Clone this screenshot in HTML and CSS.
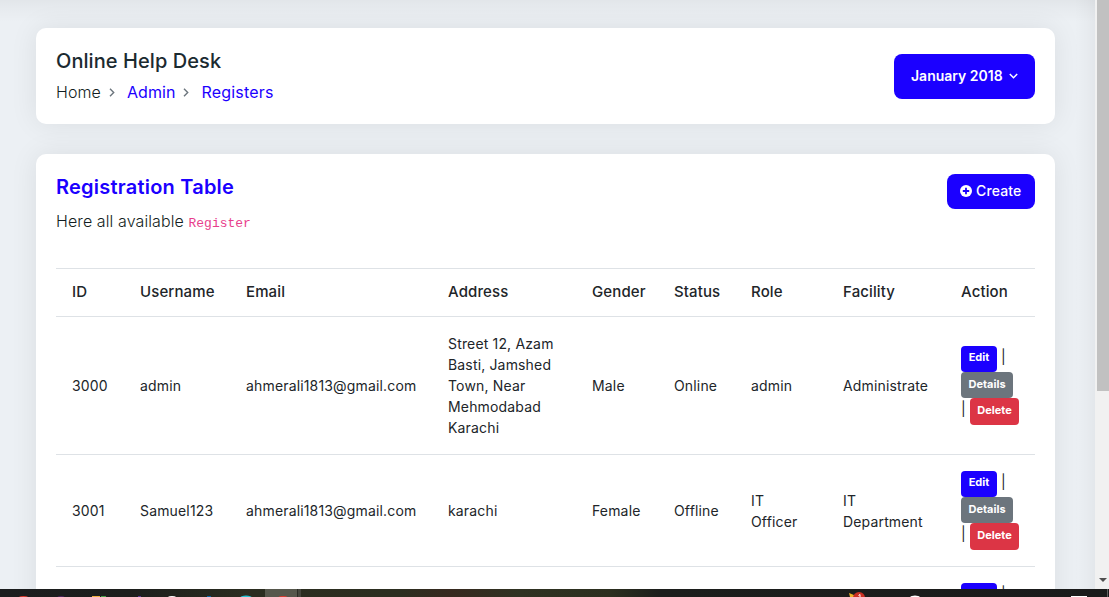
FILE: index.html
```html
<!DOCTYPE html>
<html lang="en">
<head>
<meta charset="utf-8">
<title>Online Help Desk</title>
<link rel="stylesheet" href="styles.css">
</head>
<body>
<div class="screen">
  <div class="browser">
    <main class="page">
      <section class="card page-header">
        <div>
          <h4 class="title">Online Help Desk</h4>
          <nav class="breadcrumb">
            <span>Home</span>
            <svg class="sep" viewBox="0 0 6 9"><path d="M1 .8 4.7 4.500 1 8.200"/></svg>
            <a>Admin</a>
            <svg class="sep" viewBox="0 0 6 9"><path d="M1 .8 4.7 4.500 1 8.200"/></svg>
            <a class="current">Registers</a>
          </nav>
        </div>
        <button class="month">January 2018<svg viewBox="0 0 9 6"><path d="M.8 1 4.500 4.700 8.200 1"/></svg></button>
      </section>
      <section class="card table-card">
        <div class="card-head">
          <div>
            <h4 class="table-title">Registration Table</h4>
            <p class="lead">Here all available <code>Register</code></p>
          </div>
          <button class="create"><svg viewBox="0 0 12 12"><circle cx="6" cy="6" r="6"/><path d="M6 2.800v6.400M2.800 6h6.400"/></svg>Create</button>
        </div>
        <table class="table">
          <colgroup><col class="c-id"><col class="c-user"><col class="c-mail"><col class="c-addr"><col class="c-gender"><col class="c-status"><col class="c-role"><col class="c-fac"><col class="c-act"></colgroup>
          <thead>
            <tr><th>ID</th><th>Username</th><th>Email</th><th>Address</th><th>Gender</th><th>Status</th><th>Role</th><th>Facility</th><th>Action</th></tr>
          </thead>
          <tbody>
            <tr class="row-tall">
              <td>3000</td><td>admin</td><td>ahmerali1813@gmail.com</td><td>Street 12, Azam Basti, Jamshed Town, Near Mehmodabad Karachi</td><td>Male</td><td>Online</td><td>admin</td><td>Administrate</td>
              <td><div class="actions"><div><a class="btn edit">Edit</a><i class="bar">|</i></div><div><a class="btn details">Details</a></div><div><i class="bar lead-bar">|</i><a class="btn delete">Delete</a></div></div></td>
            </tr>
            <tr class="row-mid">
              <td>3001</td><td>Samuel123</td><td>ahmerali1813@gmail.com</td><td>karachi</td><td>Female</td><td>Offline</td><td>IT Officer</td><td>IT Department</td>
              <td><div class="actions"><div><a class="btn edit">Edit</a><i class="bar">|</i></div><div><a class="btn details">Details</a></div><div><i class="bar lead-bar">|</i><a class="btn delete">Delete</a></div></div></td>
            </tr>
            <tr class="row-mid">
              <td></td><td></td><td></td><td></td><td></td><td></td><td></td><td></td>
              <td><div class="actions"><div><a class="btn edit"></a><i class="bar">|</i></div></div></td>
            </tr>
          </tbody>
        </table>
      </section>
    </main>
    <div class="scrollbar"><div class="thumb"></div><svg class="arrow" viewBox="0 0 8 4"><path d="M0 0h8L4 4z"/></svg></div>
  </div>
  <footer class="taskbar">
    <svg width="1109" height="8" viewBox="0 0 1109 8">
      <rect x="265" width="32" height="8" fill="#56574c"/>
      <rect x="297" width="1" height="8" fill="#2b2c25"/>
      <rect x="298" width="3" height="8" fill="#45463d"/>
      <ellipse cx="23.500" cy="9" rx="5" ry="2" fill="#e03a2c"/>
      <ellipse cx="61" cy="9" rx="4" ry="2" fill="#4d2560"/>
      <path d="M92 7h8v1h-8z" fill="#f0b040"/><path d="M101 7h5v1h-5z" fill="#44a047"/>
      <path d="M138 7h3v1h-3z" fill="#5c3a96"/>
      <ellipse cx="172" cy="9" rx="4.500" ry="2" fill="#fff"/>
      <path d="M207 7h4v1h-4z" fill="#0868a8"/>
      <ellipse cx="246" cy="9" rx="6" ry="2.500" fill="#24c4d4"/>
      <ellipse cx="283" cy="9" rx="5" ry="2" fill="#e03a2c"/>
      <path d="M849 4l5 2v2h-4z" fill="#f0b429"/>
      <circle cx="859" cy="9" r="6" fill="#cb2f22"/>
      <path d="M858.500 6.500 860 5.500V8" fill="none" stroke="#fff"/>
      <ellipse cx="915" cy="9" rx="5" ry="2.500" fill="#fff"/>
      <path d="M1071 7h16v1h-16z" fill="#fff"/>
      <path d="M1107 0h1v8h-1z" fill="#606060"/>
    </svg>
  </footer>
</div>
</body>
</html>
```

FILE: styles.css
```css
* { box-sizing: border-box; }
body { margin: 0; overflow: hidden; font-family: Inter, "Liberation Sans", sans-serif; color: #131e22; }
h4, p { margin: 0; font-weight: 400; }
button { border: 0; font-family: inherit; color: #fff; background: #1b00ff; }
.screen { height: 597px; display: flex; flex-direction: column; overflow: hidden; }
.browser { height: 589px; display: flex; overflow: hidden; }
.page {
  width: 1095px; padding: 28px 40px 0 36px; overflow: hidden;
  background:
    linear-gradient(to bottom, rgba(0,0,0,.045), rgba(0,0,0,.025) 8px, transparent 22px),
    linear-gradient(to left, rgba(0,0,0,.04), rgba(0,0,0,.02) 8px, transparent 20px),
    #ecf0f4;
}
.card { background: #fff; border-radius: 10px; box-shadow: 0 0 28px rgba(0,0,0,.08); padding: 20px; }
.page-header { height: 96px; display: flex; justify-content: space-between; align-items: flex-start; margin-bottom: 30px; }
.title { font-size: 20px; font-weight: 500; line-height: 26px; letter-spacing: .07px; color: #1b2a30; }
.breadcrumb { display: flex; align-items: center; font-size: 16px; line-height: 24px; margin-top: 6px; font-weight: 350; letter-spacing: .1px; }
.breadcrumb a { color: #1b00ff; font-weight: 400; letter-spacing: .05px; }
.breadcrumb .current { letter-spacing: .2px; }
.sep { width: 6px; height: 9px; margin: 1px 12px 0 8px; fill: none; stroke: #6c757d; stroke-width: 1.4; }
.month { width: 141px; height: 45px; margin-top: 6px; border-radius: 8px; padding: 0 17px 2px 17px; display: flex; align-items: center; justify-content: space-between; font-size: 14px; font-weight: 600; white-space: nowrap; }
.month svg { width: 9px; height: 6px; margin-top: 1px; fill: none; stroke: #fff; stroke-width: 1.5; }
.table-card { height: 700px; }
.card-head { height: 94px; display: flex; justify-content: space-between; align-items: flex-start; }
.table-title { font-size: 20px; font-weight: 600; line-height: 26px; letter-spacing: .22px; color: #1b00ff; }
.lead { font-size: 16px; line-height: 24px; margin-top: 9px; font-weight: 300; letter-spacing: .1px; }
.lead code { font: 13px "Liberation Mono", monospace; letter-spacing: 0; color: #e83e8c; }
.create { width: 88px; height: 35px; border-radius: 8px; padding: 0 13px 2px; display: flex; align-items: center; gap: 4px; font-size: 14px; font-weight: 500; letter-spacing: .15px; }
.create svg { width: 12px; height: 12px; margin-top: 1px; flex: none; fill: #fff; }
.create path { stroke: #1b00ff; stroke-width: 1.8; }
.table { width: 979px; table-layout: fixed; border-collapse: separate; border-spacing: 0; }
.c-id { width: 68px; } .c-user { width: 106px; } .c-mail { width: 202px; } .c-addr { width: 144px; }
.c-gender { width: 82px; } .c-status { width: 77px; } .c-role { width: 92px; } .c-fac { width: 118px; } .c-act { width: 90px; }
.table th { height: 49px; padding: 0 0 2px 16px; text-align: left; font-size: 15px; font-weight: 500; letter-spacing: .12px; color: #212529; border-top: 1px solid #dee2e6; border-bottom: 1px solid #dee2e6; }
.table td { padding: 0 16px; font-size: 14px; line-height: 21px; font-weight: 400; letter-spacing: .16px; color: #212529; border-bottom: 1px solid #dee2e6; vertical-align: middle; }
.row-tall { height: 138px; }
.row-mid { height: 112px; }
.actions { display: flex; flex-direction: column; width: 60px; height: 79px; }
.actions > div { display: flex; height: 26px; }
.actions > div:last-child { height: 27px; }
.actions > div:only-child { height: 26px; }
.btn { border-radius: 4px; height: 100%; color: #fff; font-size: 11px; font-weight: 700; letter-spacing: 0; line-height: 23px; text-align: center; }
.edit { background: #1b00ff; width: 36px; }
.details { background: #6c757d; width: 52px; line-height: 25px; }
.delete { background: #dc3545; width: 49px; line-height: 25px; }
.bar { font-style: normal; font-size: 14px; line-height: 21px; width: 5px; margin-left: 4px; }
.lead-bar { margin-left: 0; width: 9px; }
.scrollbar { width: 14px; height: 589px; background: #f1f1f1; display: flex; flex-direction: column; justify-content: space-between; padding: 0 0 7px 2px; }
.thumb { height: 391px; background: #c1c1c1; }
.arrow { width: 8px; height: 4px; margin-left: 2px; fill: #505050; }
.taskbar { height: 8px; background: linear-gradient(90deg, #1b1d1e 0, #1c1e1c 130px, #2b2d20 250px, #2c2e20 400px, #37291f 450px, #2f3222 520px, #2c2f1f 610px, #1c1e1c 660px, #1a1b1b 100%); }
.taskbar svg { display: block; }
```
